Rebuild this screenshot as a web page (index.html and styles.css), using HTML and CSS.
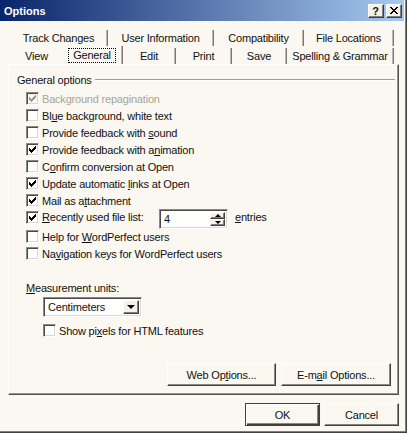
FILE: index.html
```html
<!DOCTYPE html>
<html>
<head>
<meta charset="utf-8">
<title>Options</title>
<link rel="stylesheet" href="styles.css">
</head>
<body>
<div class="dialog">
  <div class="titlebar">
    <span class="title">Options</span>
    <span class="tbtn help">?</span>
    <span class="tbtn close"><svg width="8" height="7" viewBox="0 0 8 7" shape-rendering="crispEdges"><path d="M0 0h2v1h1v1h2V1h1V0h2v1H7v1H6v1H5v1h1v1h1v1h1v1H6V6H5V5H3v1H2v1H0V6h1V5h1V4h1V3H2V2H1V1H0z" fill="#000"/></svg></span>
  </div>

  <div class="tabrow row1">
    <span class="tab">Track Changes</span>
    <span class="tab">User Information</span>
    <span class="tab">Compatibility</span>
    <span class="tab">File Locations</span>
  </div>
  <div class="tabrow row2">
    <span class="tab">View</span>
    <span class="tab selected"><span class="focus">General</span></span>
    <span class="tab">Edit</span>
    <span class="tab">Print</span>
    <span class="tab">Save</span>
    <span class="tab">Spelling &amp; Grammar</span>
  </div>

  <div class="panel">
    <div class="grouphead"><span>General options</span><span class="gline"></span></div>

    <div class="row disabled"><span class="cb checked"><svg width="7" height="7" viewBox="0 0 7 7" shape-rendering="crispEdges"><path d="M0 2h1v3H0zM1 3h1v3H1zM2 4h1v3H2zM3 3h1v3H3zM4 2h1v3H4zM5 1h1v3H5zM6 0h1v3H6z"/></svg></span><span class="lbl">Background repagination</span></div>
    <div class="row"><span class="cb"></span><span class="lbl">Bl<u>u</u>e background, white text</span></div>
    <div class="row"><span class="cb"></span><span class="lbl">Provide feedback with <u>s</u>ound</span></div>
    <div class="row"><span class="cb checked"><svg width="7" height="7" viewBox="0 0 7 7" shape-rendering="crispEdges"><path d="M0 2h1v3H0zM1 3h1v3H1zM2 4h1v3H2zM3 3h1v3H3zM4 2h1v3H4zM5 1h1v3H5zM6 0h1v3H6z"/></svg></span><span class="lbl">Provide feedback with a<u>n</u>imation</span></div>
    <div class="row"><span class="cb"></span><span class="lbl">C<u>o</u>nfirm conversion at Open</span></div>
    <div class="row"><span class="cb checked"><svg width="7" height="7" viewBox="0 0 7 7" shape-rendering="crispEdges"><path d="M0 2h1v3H0zM1 3h1v3H1zM2 4h1v3H2zM3 3h1v3H3zM4 2h1v3H4zM5 1h1v3H5zM6 0h1v3H6z"/></svg></span><span class="lbl">Update automatic <u>l</u>inks at Open</span></div>
    <div class="row"><span class="cb checked"><svg width="7" height="7" viewBox="0 0 7 7" shape-rendering="crispEdges"><path d="M0 2h1v3H0zM1 3h1v3H1zM2 4h1v3H2zM3 3h1v3H3zM4 2h1v3H4zM5 1h1v3H5zM6 0h1v3H6z"/></svg></span><span class="lbl">Mail as a<u>t</u>tachment</span></div>
    <div class="row spinrow"><span class="cb checked"><svg width="7" height="7" viewBox="0 0 7 7" shape-rendering="crispEdges"><path d="M0 2h1v3H0zM1 3h1v3H1zM2 4h1v3H2zM3 3h1v3H3zM4 2h1v3H4zM5 1h1v3H5zM6 0h1v3H6z"/></svg></span><span class="lbl fixed"><u>R</u>ecently used file list:</span>
      <span class="spin"><span class="spinval">4</span><span class="spinbtns"><span class="sb up"></span><span class="sb down"></span></span></span>
      <span class="entries"><u>e</u>ntries</span>
    </div>
    <div class="row"><span class="cb"></span><span class="lbl">Help for <u>W</u>ordPerfect users</span></div>
    <div class="row"><span class="cb"></span><span class="lbl">Na<u>v</u>igation keys for WordPerfect users</span></div>

    <div class="measure"><u>M</u>easurement units:</div>
    <div class="combo"><span class="comboval">Centimeters</span><span class="dropbtn"><span class="tri"></span></span></div>
    <div class="row pixrow"><span class="cb"></span><span class="lbl">Show pi<u>x</u>els for HTML features</span></div>

    <div class="panelbtns">
      <span class="btn web">Web Op<u>t</u>ions...</span>
      <span class="btn mail">E-m<u>a</u>il Options...</span>
    </div>
  </div>

  <div class="footer">
    <span class="btn ok default">OK</span>
    <span class="btn cancel">Cancel</span>
  </div>
</div>
</body>
</html>
```

FILE: styles.css
```css
html, body {
  margin: 0;
  padding: 0;
  background: #fbf8f1;
}

body {
  font-family: "Liberation Sans", Arial, sans-serif;
  font-size: 11px;
  letter-spacing: -0.2px;
  color: #111;
}

.dialog {
  width: 407px;
  height: 433px;
  box-sizing: border-box;
  background: #fbf8f1;
  border-right: 1px solid #404040;
  border-bottom: 1px solid #404040;
  box-shadow: inset -1px -1px #808080;
  padding-right: 2px;
  display: flex;
  flex-direction: column;
}

/* Title bar */
.titlebar {
  height: 21px;
  display: flex;
  align-items: center;
  padding: 0 2px 0 4px;
  background: linear-gradient(to right, #0a246a, #a6caf0);
}

.title {
  flex: 1;
  color: #fff;
  font-weight: bold;
  font-size: 11px;
  letter-spacing: 0;
}

.tbtn {
  width: 16px;
  height: 14px;
  box-sizing: border-box;
  background: #f4f1ea;
  border-top: 1px solid #fff;
  border-left: 1px solid #fff;
  border-right: 1px solid #404040;
  border-bottom: 1px solid #404040;
  box-shadow: inset -1px -1px #808080;
  display: flex;
  align-items: center;
  justify-content: center;
}

.tbtn.help {
  margin-right: 2px;
  font-weight: bold;
  font-size: 11px;
  line-height: 12px;
  padding-right: 1px;
}

/* Tabs */
.tabrow {
  display: grid;
  margin-left: 10px;
  width: 384px;
  height: 18px;
}

.row1 {
  margin-top: 7px;
  grid-template-columns: 98px 106px 90px 90px;
}

.row2 {
  grid-template-columns: 53px 60px 53px 56px 55px 107px;
}

.tab {
  margin-top: 2px;
  height: 16px;
  line-height: 16px;
  text-align: center;
  white-space: nowrap;
  border-right: 1px solid #7c7872;
  box-shadow: inset -1px 0 #bcb8b0;
}

.row2 .tab:first-child {
  border-right: none;
  box-shadow: none;
}

.tab.selected {
  margin-top: 0;
  height: 18px;
  display: flex;
  align-items: center;
  justify-content: center;
  padding-right: 1px;
}

.focus {
  border: 1px dotted #000;
  line-height: 13px;
  padding: 0 4px;
}

/* Panel */
.panel {
  margin-left: 8px;
  width: 391px;
  height: 331px;
  box-sizing: border-box;
  border-top: 1px solid #fff;
  border-left: 1px solid #fff;
  border-right: 1px solid #505050;
  border-bottom: 1px solid #505050;
  box-shadow: inset -1px -1px #9a968f;
  padding: 8px 3px 8px 8px;
  display: flex;
  flex-direction: column;
}

.grouphead {
  height: 14px;
  display: flex;
  align-items: center;
}

.gline {
  flex: 1;
  margin-left: 3px;
  border-top: 1px solid #a09c94;
  border-bottom: 1px solid #fff;
}

.row {
  height: 17px;
  display: flex;
  align-items: center;
  padding-left: 9px;
}

.grouphead + .row {
  margin-top: 3px;
}

.cb {
  width: 13px;
  height: 13px;
  box-sizing: border-box;
  flex: none;
  background: #fff;
  border-top: 1px solid #8c8880;
  border-left: 1px solid #8c8880;
  border-right: 1px solid #fff;
  border-bottom: 1px solid #fff;
  box-shadow: inset 1px 1px #4a4a4a, inset -1px -1px #dcd8d0;
  display: flex;
  align-items: center;
  justify-content: center;
  margin-right: 3px;
}

.cb svg {
  fill: #000;
}

.disabled .cb {
  background: #fbf8f1;
}

.disabled .cb svg {
  fill: #9c9890;
}

.disabled .lbl {
  color: #a8a49c;
}

.lbl {
  white-space: nowrap;
}

.spinrow {
  height: 19px;
  align-items: flex-start;
}

.spinrow .cb {
  margin-top: 2px;
}

.spinrow .lbl, .spinrow .entries {
  line-height: 17px;
}

.lbl.fixed {
  width: 117px;
}

.spin {
  width: 69px;
  height: 20px;
  box-sizing: border-box;
  background: #fff;
  border-top: 1px solid #8c8880;
  border-left: 1px solid #8c8880;
  border-right: 1px solid #fff;
  border-bottom: 1px solid #fff;
  box-shadow: inset 1px 1px #4a4a4a, inset -1px -1px #dcd8d0;
  display: flex;
  padding: 2px;
}

.spinval {
  flex: 1;
  padding-left: 2px;
  line-height: 14px;
}

.spinbtns {
  width: 15px;
  display: flex;
  flex-direction: column;
}

.sb {
  flex: 1;
  box-sizing: border-box;
  background: #f4f1ea;
  border-top: 1px solid #fff;
  border-left: 1px solid #fff;
  border-right: 1px solid #404040;
  border-bottom: 1px solid #404040;
  box-shadow: inset -1px -1px #808080;
  display: flex;
  align-items: center;
  justify-content: center;
}

.sb::before {
  content: "";
  width: 0;
  height: 0;
  border-left: 3px solid transparent;
  border-right: 3px solid transparent;
}

.sb.up::before {
  border-bottom: 3px solid #000;
}

.sb.down::before {
  border-top: 3px solid #000;
}

.entries {
  margin-left: 7px;
}

.measure {
  margin-top: 19px;
  height: 14px;
  line-height: 14px;
  padding-left: 9px;
}

.combo {
  margin-top: 2px;
  margin-left: 26px;
  width: 99px;
  height: 20px;
  box-sizing: border-box;
  background: #fff;
  border-top: 1px solid #8c8880;
  border-left: 1px solid #8c8880;
  border-right: 1px solid #fff;
  border-bottom: 1px solid #fff;
  box-shadow: inset 1px 1px #4a4a4a, inset -1px -1px #dcd8d0;
  display: flex;
  padding: 2px;
}

.comboval {
  flex: 1;
  padding-left: 2px;
  line-height: 14px;
}

.dropbtn {
  width: 16px;
  box-sizing: border-box;
  background: #f4f1ea;
  border-top: 1px solid #fff;
  border-left: 1px solid #fff;
  border-right: 1px solid #404040;
  border-bottom: 1px solid #404040;
  box-shadow: inset -1px -1px #808080;
  display: flex;
  align-items: center;
  justify-content: center;
}

.tri {
  width: 0;
  height: 0;
  border-left: 4px solid transparent;
  border-right: 4px solid transparent;
  border-top: 4px solid #000;
}

.pixrow {
  margin-top: 5px;
  padding-left: 26px;
}

/* Buttons */
.panelbtns {
  margin-top: auto;
  display: flex;
  justify-content: flex-end;
  gap: 5px;
  margin-right: 4px;
}

.btn {
  height: 23px;
  box-sizing: border-box;
  background: #fbf8f1;
  border-top: 1px solid #fff;
  border-left: 1px solid #fff;
  border-right: 1px solid #404040;
  border-bottom: 1px solid #404040;
  box-shadow: inset -1px -1px #8c8880;
  display: flex;
  align-items: center;
  justify-content: center;
  white-space: nowrap;
}

.btn.web {
  width: 109px;
}

.btn.mail {
  width: 110px;
}

.footer {
  margin-top: 8px;
  margin-right: 5px;
  display: flex;
  justify-content: flex-end;
  gap: 4px;
}

.btn.ok, .btn.cancel {
  width: 75px;
}

.btn.default {
  border: 1px solid #404040;
  box-shadow: inset 1px 1px #fff, inset -1px -1px #404040, inset -2px -2px #8c8880;
}
```
